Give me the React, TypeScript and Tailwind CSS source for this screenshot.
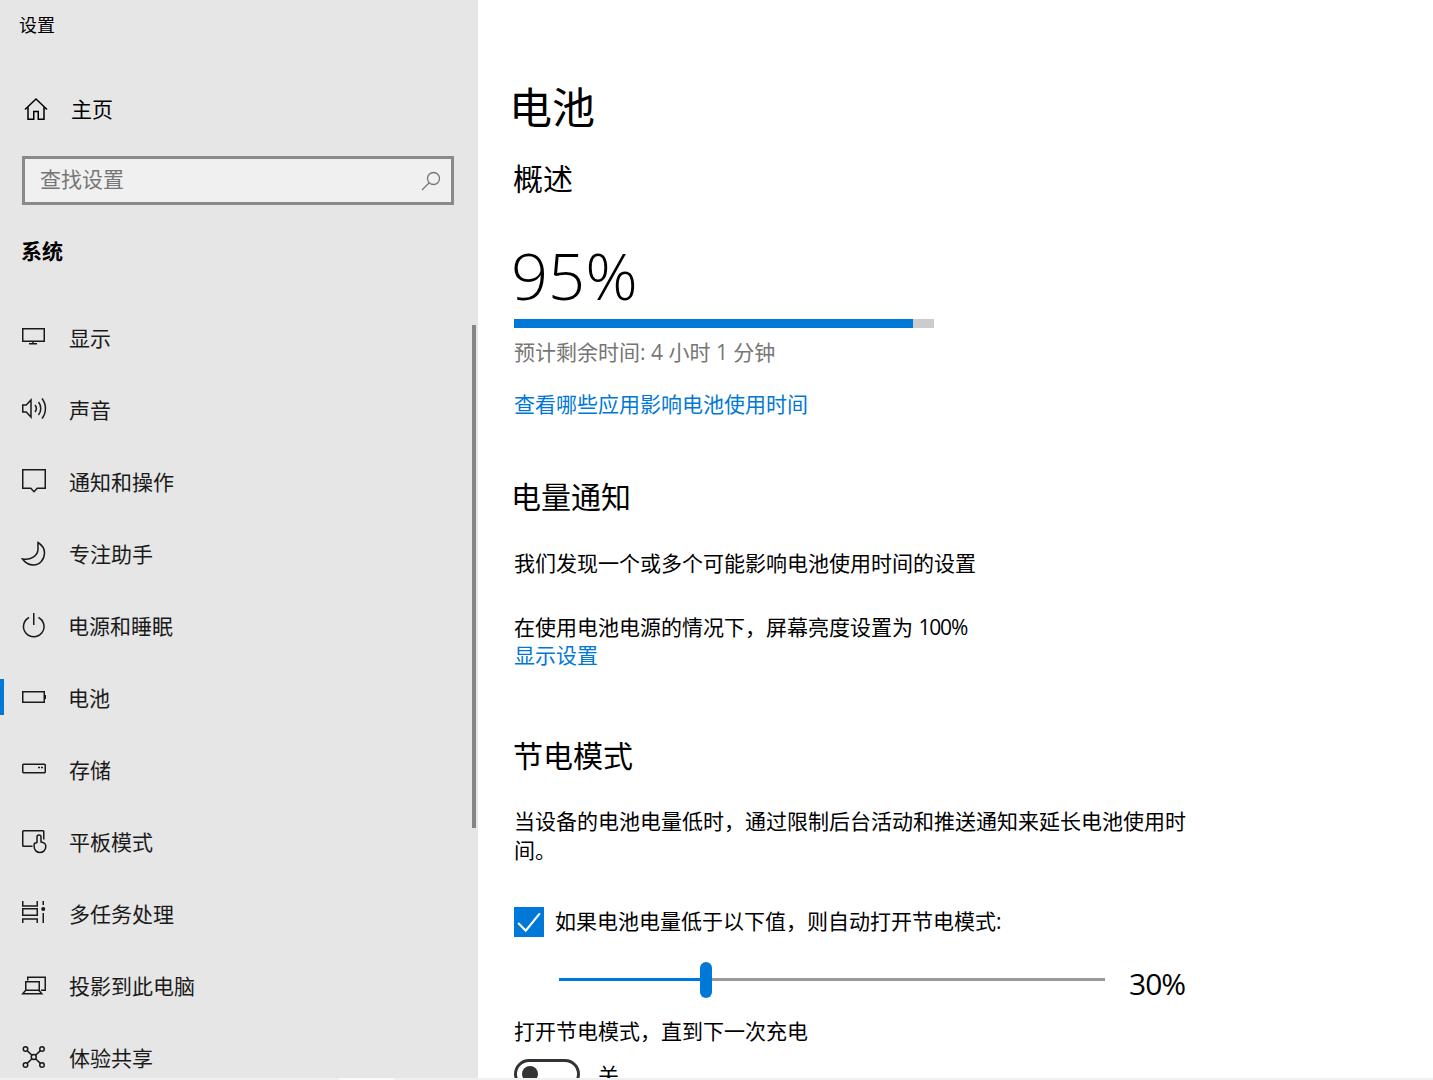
import type { ReactNode } from "react";

function Icon({ children }: { children: ReactNode }) {
  return (
    <svg viewBox="0 0 24 24" fill="none" stroke="currentColor" strokeWidth="1.5" className="w-6 h-6 overflow-visible shrink-0">
      {children}
    </svg>
  );
}

const navItems: { label: string; icon: ReactNode; active?: boolean; tight?: boolean }[] = [
  {
    label: "显示",
    icon: (
      <>
        <rect x="0.75" y="2.75" width="21.5" height="12.5" />
        <path d="M11 15v3M7 17.75h8" />
      </>
    ),
  },
  {
    label: "声音",
    icon: (
      <g transform="translate(0 -1.5)">
        <path d="M0.75 8.5h3.5L9 3.500v17l-4.750-5H0.750z" />
        <path d="M13 8.500c1.600 2 1.600 5 0 7M16.500 5.500c3 3.700 3 9.300 0 13M20 2c4.600 5.800 4.600 14.200 0 20" />
      </g>
    ),
  },
  {
    label: "通知和操作",
    icon: <path d="M0.750-0.250h22.500v18.500h-8l-3.250 3.500-3.250-3.500h-8z" />,
  },
  {
    label: "专注助手",
    icon: (
      <path d="M16 0.500c4 2.500 6.500 6.500 6.500 10.500 0 6.500-5 12-11 12-4.500 0-8.500-2.500-11-6 8 1.500 15.500-3 15.500-10 0-2.500-.100-4.500 0-6.500z" />
    ),
  },
  {
    label: "电源和睡眠",
    tight: true,
    icon: (
      <>
        <path d="M11.750-1V11" />
        <path d="M7 3.500a10.250 10.250 0 1 0 9.500 0" />
      </>
    ),
  },
  {
    label: "电池",
    active: true,
    tight: true,
    icon: (
      <>
        <rect x="0.750" y="5.750" width="21.500" height="10.500" />
        <path d="M23.250 9v4" />
      </>
    ),
  },
  {
    label: "存储",
    icon: (
      <>
        <path d="M1.500 6.250h21a.750.750 0 0 1 .750.750v7a.750.750 0 0 1-.750.750h-21a.750.750 0 0 1-.750-.750V7a.750.750 0 0 1 .750-.750z" />
        <path d="M16 9.600h2M19 9.600h2" />
      </>
    ),
  },
  {
    label: "平板模式",
    icon: (
      <>
        <path d="M10.500 16.250H1.500a.750.750 0 0 1-.750-.750V1.500a.750.750 0 0 1 .750-.750h19.500a.750.750 0 0 1 .750.750v8" />
        <path d="M15 13V7a2 2 0 0 1 4 0v5l2.500.700c1.500.500 2.250 1.500 2.250 3v1.100a5.800 5.800 0 0 1-11.600 0v-2.500c0-.900.500-1.500 2.850-1.500" />
      </>
    ),
  },
  {
    label: "多任务处理",
    icon: (
      <>
        <path d="M0.750-1v5h14.500v-5M0.750 21v-4h14.500v4" />
        <rect x="0.750" y="6.750" width="14.500" height="6.500" />
        <path d="M21.250-1v4M21.250 11v10" />
        <circle cx="21.250" cy="7" r="2" fill="currentColor" stroke="none" />
      </>
    ),
  },
  {
    label: "投影到此电脑",
    icon: (
      <>
        <path d="M5.750 6.500V3.250h17.500v13H19" />
        <rect x="3.750" y="7.750" width="13.500" height="8.500" />
        <path d="M3.500 16.500L0.750 19.750h19L17 16.500" />
      </>
    ),
  },
  {
    label: "体验共享",
    icon: (
      <>
        <circle cx="3.500" cy="3" r="2.250" />
        <circle cx="20" cy="3" r="2.250" />
        <circle cx="3.500" cy="19" r="2.250" />
        <circle cx="20" cy="19" r="2.250" />
        <circle cx="11.750" cy="11" r="2.500" />
        <path d="M5.100 4.600l4.900 4.700M18.400 4.600l-4.900 4.700M5.100 17.400l4.900-4.700M18.400 17.400l-4.900-4.700" />
      </>
    ),
  },
];

function Sidebar() {
  return (
    <aside className="relative w-[478px] shrink-0 bg-[#e6e6e6] text-[#1a1a1a] overflow-hidden">
      <div className="pl-[19px] h-[50px] flex items-center text-[18px] text-black">设置</div>

      {/* Home */}
      <div className="flex items-center h-[72px] mt-[24px] pl-[24px] text-black">
        <Icon>
          <path d="M1 11.500L12 1l11 10.500M4 9v12.250h5.750V13.500h4.500v7.750H20V9" />
        </Icon>
        <span className="ml-[23px] -mt-[1px] text-[21px]">主页</span>
      </div>

      {/* Search */}
      <div className="mt-[10px] ml-[22px] w-[432px] h-[49px] border-[3px] border-[#8a8a8a] bg-[#f0f0f0] flex items-center justify-between pl-[15px] pr-[10px] text-[21px] text-[#767676]">
        <span className="-mt-[1px]">查找设置</span>
        <svg viewBox="0 0 20 20" fill="none" stroke="currentColor" strokeWidth="1.300" className="w-[20px] h-[20px]">
          <circle cx="12.500" cy="7.500" r="6" />
          <path d="M8 12L1 19" />
        </svg>
      </div>

      <div className="mt-[29px] ml-[21px] text-[21px] font-bold text-black leading-[34px]">系统</div>

      <nav className="mt-[34px]">
        {navItems.map((item) => (
          <div key={item.label} className="relative flex items-center h-[72px] pl-[22px]">
            {item.active && <div className="absolute left-0 top-[17px] w-[4px] h-[36px] bg-[#0078d7]" />}
            <Icon>{item.icon}</Icon>
            <span className={item.tight ? "ml-[22px] mt-[1px] text-[21px]" : "ml-[23px] mt-[1px] text-[21px]"}>
              {item.label}
            </span>
          </div>
        ))}
      </nav>

      {/* Scrollbar */}
      <div className="absolute left-[472px] top-[325px] w-[4px] h-[503px] bg-[#858585]" />
    </aside>
  );
}

function Content() {
  return (
    <main className="flex-1 bg-white text-black pl-[36px] overflow-hidden">
      <h1 className="-ml-[5px] mt-[79px] text-[43px] leading-[58px]">电池</h1>
      <h2 className="-ml-[1px] mt-[21px] text-[30px] leading-[42px]">概述</h2>

      <div className="-ml-[3px] mt-[30px] text-[65px] leading-[90px] font-light">95%</div>
      <div className="-mt-[1px] w-[420px] h-[9px] bg-[#cccccc]">
        <div className="w-[399px] h-full bg-[#0078d7]" />
      </div>
      <p className="mt-[8px] text-[21px] leading-[32px] text-[#767676]">预计剩余时间: 4 小时 1 分钟</p>
      <p className="mt-[20px] text-[21px] leading-[32px] text-[#0078d7]">查看哪些应用影响电池使用时间</p>

      <h2 className="-ml-[3px] mt-[56px] text-[30px] leading-[42px]">电量通知</h2>
      <p className="mt-[29px] text-[21px] leading-[32px]">我们发现一个或多个可能影响电池使用时间的设置</p>
      <p className="mt-[32px] text-[21px] leading-[32px]">
        在使用电池电源的情况下，屏幕亮度设置为 <span className="tracking-[-1.200px]">100%</span>
      </p>
      <p className="-mt-[4px] text-[21px] leading-[32px] text-[#0078d7]">显示设置</p>

      <h2 className="-ml-[1px] mt-[64px] text-[30px] leading-[42px]">节电模式</h2>
      <p className="mt-[30px] w-[680px] text-[21px] leading-[29px]">
        当设备的电池电量低时，通过限制后台活动和推送通知来延长电池使用时间。
      </p>

      <div className="mt-[41px] flex items-center">
        <div className="w-[30px] h-[30px] bg-[#0078d7] flex items-center justify-center">
          <svg viewBox="0 0 24 24" fill="none" stroke="white" strokeWidth="2" className="w-[26px] h-[26px]">
            <path d="M2 13l7 7L22 4" />
          </svg>
        </div>
        <span className="ml-[11px] text-[21px]">如果电池电量低于以下值，则自动打开节电模式:</span>
      </div>

      <div className="mt-[24px] flex items-center h-[35px]">
        <div className="relative ml-[45px] w-[546px] h-[3px] bg-[#999999]">
          <div className="w-[147px] h-full bg-[#0078d7]" />
          <div className="absolute left-[141px] top-[-16px] w-[12px] h-[36px] rounded-full bg-[#0078d7]" />
        </div>
        <span className="ml-[24px] mt-[10px] text-[30px] leading-[40px] tracking-[-1px]">30%</span>
      </div>

      <p className="mt-[18px] text-[21px] leading-[32px]">打开节电模式，直到下一次充电</p>

      <div className="mt-[12px] flex">
        <div className="w-[66px] h-[30px] rounded-full border-[3px] border-[#333333] pl-[5px] flex items-center shrink-0">
          <div className="w-[16px] h-[16px] rounded-full bg-[#333333]" />
        </div>
        <span className="ml-[18px] text-[21px] leading-[32px]">关</span>
      </div>
    </main>
  );
}

export default function App() {
  return (
    <div className="w-[1433px] h-[1080px] flex flex-col overflow-hidden font-['Open_Sans','Noto_Sans_CJK_SC',sans-serif]">
      <div className="h-[1078px] flex overflow-hidden">
        <Sidebar />
        <Content />
      </div>
      <div className="h-[2px] bg-[#f0f0f0]">
        <div className="ml-[339px] w-[55px] h-full bg-[#fbfbfb]" />
      </div>
    </div>
  );
}
